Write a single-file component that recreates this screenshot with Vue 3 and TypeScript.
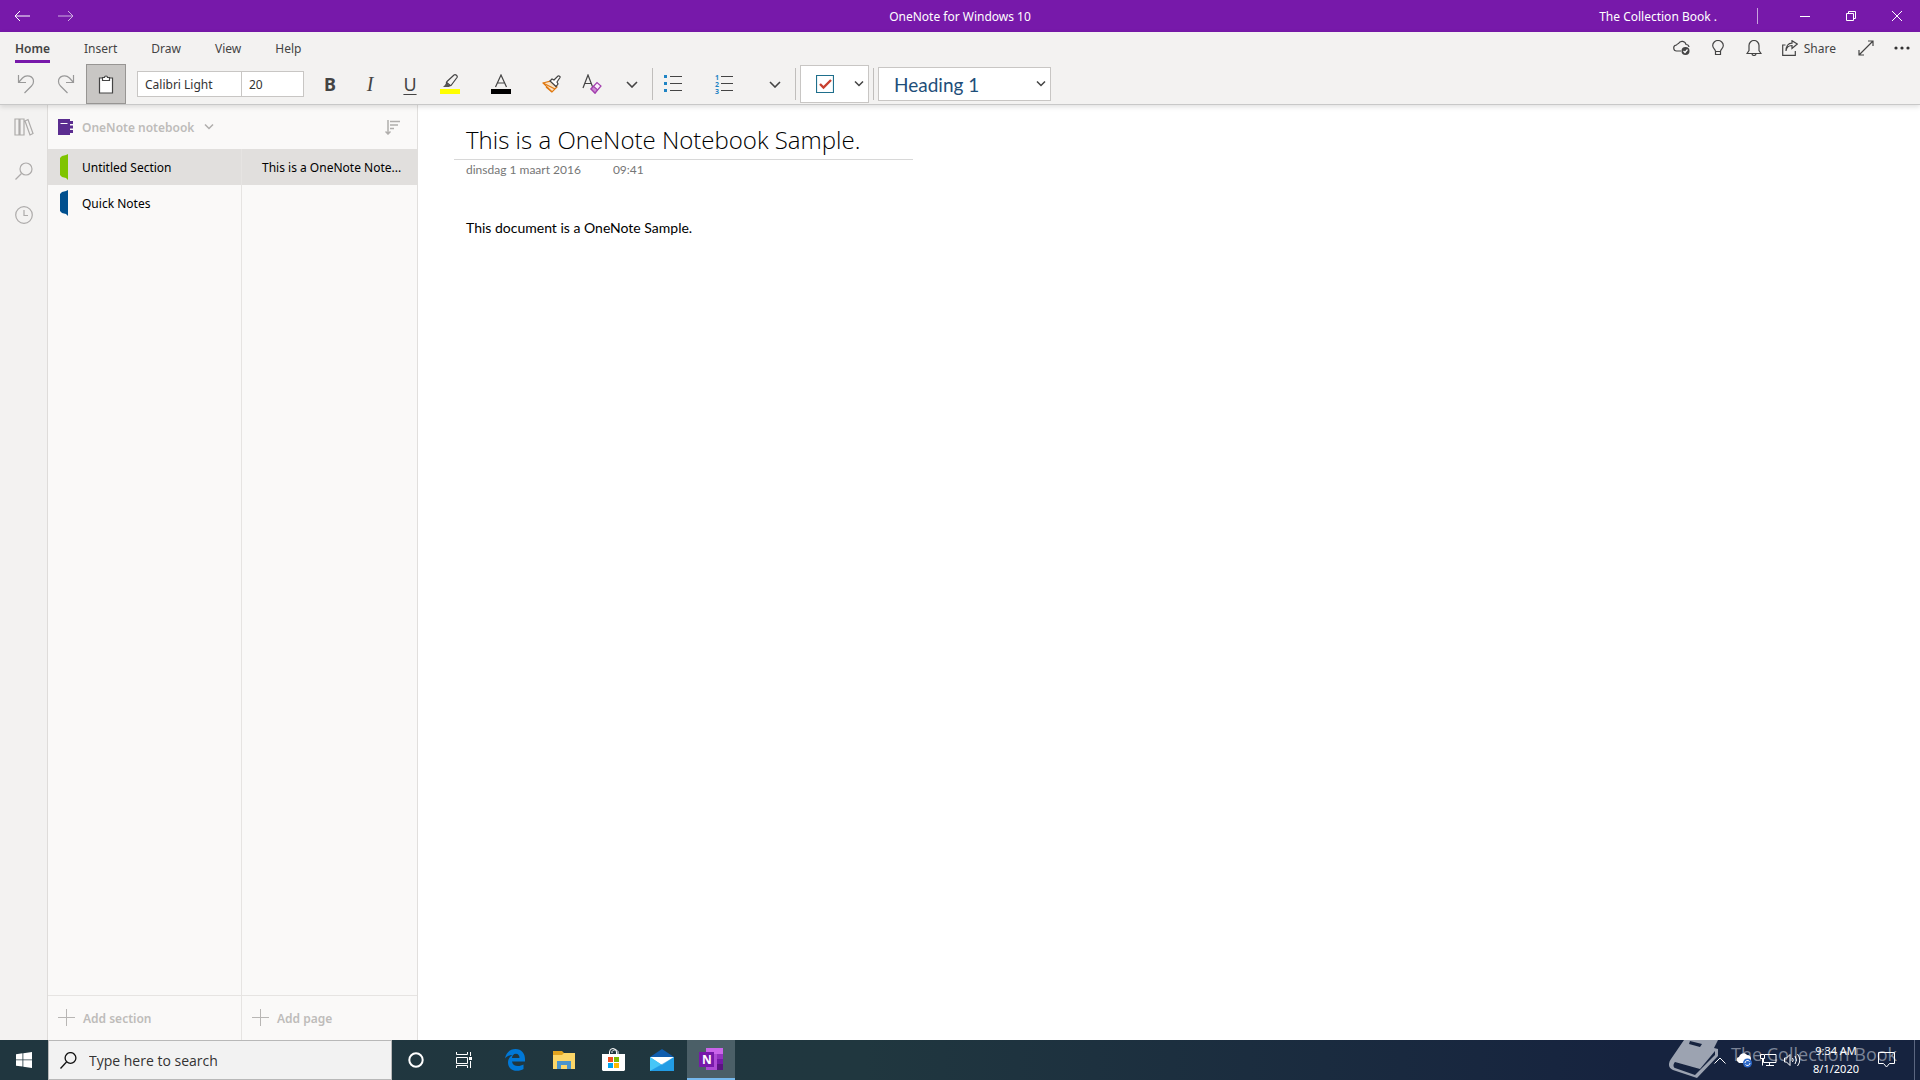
<script setup lang="ts">
import { ref } from 'vue'

const tabs = ['Home', 'Insert', 'Draw', 'View', 'Help']
const activeTab = ref('Home')

const sections = [
  { name: 'Untitled Section', color: '#7fc400' },
  { name: 'Quick Notes', color: '#00508f' },
]
const activeSection = ref('Untitled Section')

const fontName = ref('Calibri Light')
const fontSize = ref('20')
const search = ref('')
</script>

<template>
  <div class="app">
    <header class="titlebar">
      <div class="nav">
        <button aria-label="Back"><svg width="16" height="12" viewBox="0 0 16 12"><path d="M6 1 1 6l5 5M1 6h15" /></svg></button>
        <button class="dim" aria-label="Forward"><svg width="16" height="12" viewBox="0 0 16 12"><path d="m10 1 5 5-5 5M15 6H0" /></svg></button>
      </div>
      <h1>OneNote for Windows 10</h1>
      <div class="caption">
        <span class="account">The Collection Book .</span>
        <span class="caption-sep"></span>
        <button aria-label="Minimize"><svg width="10" height="10" viewBox="0 0 10 10"><path d="M0 5.500h10" /></svg></button>
        <button aria-label="Restore"><svg width="10" height="10" viewBox="0 0 10 10"><path d="M.5 2.500h7v7h-7zM2.500 2.500v-2h7v7h-2" /></svg></button>
        <button aria-label="Close"><svg width="10" height="10" viewBox="0 0 10 10"><path d="m0 0 10 10M10 0 0 10" /></svg></button>
      </div>
    </header>

    <div class="ribbon">
      <div class="tabrow">
        <nav class="tabs">
          <button v-for="t in tabs" :key="t" :class="{ active: t === activeTab }" @click="activeTab = t">{{ t }}</button>
        </nav>
        <div class="actions">
          <button aria-label="Sync status">
            <svg width="18" height="16" viewBox="0 0 18 16"><path d="M8 11H4a3 3 0 0 1-.5-6 3 3 0 0 1 2-1.500A4 4 0 0 1 13 4.500 3 3 0 0 1 16 7" /><circle cx="12.500" cy="11" r="4" fill="#444" stroke="none" /><path d="m10.500 11 1.500 1.500 2.500-3" stroke="#fff" /></svg>
          </button>
          <button aria-label="Tell me">
            <svg width="12" height="16" viewBox="0 0 12 16"><path d="M3.500 11.500C3.500 9 .7 8.500.7 5.500a5.300 5 0 0 1 10.600 0c0 3-2.800 3.500-2.800 6zM3.500 11.500v3h5v-3" /></svg>
          </button>
          <button aria-label="Notifications">
            <svg width="16" height="16" viewBox="0 0 16 16"><path d="M1 13.500h14l-2-3V5.500a5 5 0 0 0-10 0v5zM6 13.500a2 2 0 0 0 4 0" /></svg>
          </button>
          <button class="share">
            <svg width="16" height="16" viewBox="0 0 16 16"><path d="M3.500 5H.7v10.300h12.600V11M4 11c.5-4 3-5.500 6-5.500v3L15.300 4 10 .7v2.500C6 3.200 4 6.500 4 11z" /></svg>
            Share
          </button>
          <button aria-label="Full screen">
            <svg width="16" height="16" viewBox="0 0 16 16"><path d="M1 15 15 1M10 1h5v5M1 10v5h5" /></svg>
          </button>
          <button aria-label="More">
            <svg width="16" height="4" viewBox="0 0 16 4"><g fill="#333" stroke="none"><circle cx="2" cy="2" r="1.600" /><circle cx="8" cy="2" r="1.600" /><circle cx="14" cy="2" r="1.600" /></g></svg>
          </button>
        </div>
      </div>

      <div class="toolbar">
        <button class="faded" aria-label="Undo"><svg width="18" height="20" viewBox="0 0 18 20"><path d="M1.500 1v7.500H9M1.500 8.500l4-4.500c4-4 11-2 11 3.500 0 2-1 3.500-2 4.500l-7 7" /></svg></button>
        <button class="faded" aria-label="Redo"><svg width="18" height="20" viewBox="0 0 18 20"><path d="M16.500 1v7.500H9M16.500 8.500l-4-4.500c-4-4-11-2-11 3.500 0 2 1 3.500 2 4.500l7 7" /></svg></button>
        <button class="paste" aria-label="Paste"><svg width="16" height="19" viewBox="0 0 16 19"><path d="M1.500 3h13v15h-13z" fill="#fff" /><path d="M4.500 5.500v-3h2a1.500 1.500 0 0 1 3 0h2v3z" fill="#fff" /></svg></button>

        <div class="fontbox">
          <input v-model="fontName" class="font-name" aria-label="Font" />
          <input v-model="fontSize" class="font-size" aria-label="Font size" />
        </div>

        <button class="bold" aria-label="Bold">B</button>
        <button class="italic" aria-label="Italic">I</button>
        <button class="underline" aria-label="Underline">U</button>
        <button aria-label="Highlight">
          <svg width="20" height="20" viewBox="0 0 20 20"><path d="M7 7.500 14 1c1.500-1 4 1 3 2.500L11 11.500l-4 .5-1-1zM6 8l5 4" /><path d="m3 13 4-4 3 3-1 1z" fill="#555" stroke="none" /><path d="M0 15h20v5H0z" fill="#ff0" stroke="none" /></svg>
        </button>
        <button class="apart" aria-label="Font color">
          <svg width="20" height="20" viewBox="0 0 20 20"><path d="M4.500 13 10 1l5.500 12M6.500 9h7" /><path d="M0 15h20v5H0z" fill="#000" stroke="none" /></svg>
        </button>
        <button class="apart" aria-label="Format painter">
          <svg width="20" height="18" viewBox="0 0 20 18"><path d="m1 8 8-2 6 6-5 5z" fill="#fbe3c6" stroke="#e07a12" /><path d="m1 8 12 6M4 12l6 5" stroke="#e07a12" /><path d="m8 6 2-2 2 1 4-4c1-.5 2.500.5 2 1.500L15 7l1 2-2 2.500z" fill="#fff" /></svg>
        </button>
        <button aria-label="Clear formatting">
          <svg width="20" height="20" viewBox="0 0 20 20"><path d="M1 14 6 1l5 13M3 9.500h6" /><path d="m9 15 6-6.500 4 3.500-6 7z" fill="#fbeefb" stroke="#a33fae" /><path d="m9 15 2.500-2.700 4 3.500L13 19z" fill="#cb8bd2" stroke="#a33fae" /></svg>
        </button>
        <button aria-label="More formatting"><svg width="12" height="7" viewBox="0 0 12 7"><path d="m1 1 5 5 5-5" stroke-width="1.600" /></svg></button>
        <span class="sep"></span>
        <button aria-label="Bullets">
          <svg width="18" height="18" viewBox="0 0 18 18"><path d="M0 0h3v3H0zM0 7h3v3H0zM0 14h3v3H0z" fill="#1f84c4" stroke="none" /><path d="M6 1.500h12M6 8.500h12M6 15.500h12" /></svg>
        </button>
        <button class="apart numbering" aria-label="Numbering">
          <span class="digits"><i>1</i><i>2</i><i>3</i></span>
          <svg width="12" height="18" viewBox="0 0 12 18"><path d="M0 1.500h12M0 8.500h12M0 15.500h12" /></svg>
        </button>
        <button class="apart" aria-label="More list options"><svg width="12" height="7" viewBox="0 0 12 7"><path d="m1 1 5 5 5-5" stroke-width="1.600" /></svg></button>
        <span class="sep"></span>
        <button class="todo" aria-label="To do tag">
          <svg width="18" height="18" viewBox="0 0 18 18"><path d="M.5.5h17v17H.5z" stroke="#1f6f8c" /><path d="m4 9 3.500 3.500L15 5" stroke="#c8402f" stroke-width="2.400" /></svg>
          <svg width="10" height="6" viewBox="0 0 10 6"><path d="m1 .5 4 4 4-4" stroke-width="1.500" /></svg>
        </button>
        <span class="sep"></span>
        <div class="style-picker">
          <select aria-label="Styles"><option>Heading 1</option></select>
          <svg width="10" height="6" viewBox="0 0 10 6"><path d="m1 .5 4 4 4-4" stroke-width="1.500" /></svg>
        </div>
      </div>
    </div>

    <main class="workspace">
      <aside class="rail">
        <button aria-label="Notebooks"><svg width="20" height="18" viewBox="0 0 20 18"><path d="M1 1h4v16H1zM6 1h4v16H6zM11 3l3-1.500 5 14-3 1.500z" /></svg></button>
        <button aria-label="Search"><svg width="18" height="18" viewBox="0 0 18 18"><circle cx="11" cy="7" r="6" /><path d="M6.500 11.500.5 17.500" /></svg></button>
        <button aria-label="Recent notes"><svg width="18" height="18" viewBox="0 0 18 18"><circle cx="9" cy="9" r="8.300" /><path d="M9 4v5.500h4" /></svg></button>
      </aside>

      <section class="navpane">
        <div class="notebook">
          <svg width="16" height="16" viewBox="0 0 16 16"><path d="M0 0h12v16H0zM12 2h3v3h-3zM12 6.500h3v3h-3zM12 11h3v3h-3z" fill="#5b2d90" /><path d="M2.500 4.500h7" stroke="#fff" /></svg>
          <button class="notebook-name">OneNote notebook <svg width="10" height="6" viewBox="0 0 10 6"><path d="m1 .5 4 4 4-4" /></svg></button>
          <button class="sort" aria-label="Sort pages"><svg width="15" height="15" viewBox="0 0 15 15"><path d="M3 0v14M.5 11.500 3 14l2.500-2.500M5 1.500h10M5 5h8M5 8.500h4" /></svg></button>
        </div>
        <div class="lists">
          <div class="column sections">
            <ul>
              <li v-for="s in sections" :key="s.name">
                <button :class="{ selected: s.name === activeSection }" @click="activeSection = s.name">
                  <svg width="8" height="26" viewBox="0 0 8 26"><path d="M8 0v26l-2-2-4-1-2-2V4l2-2 4-1z" :fill="s.color" /></svg>
                  {{ s.name }}
                </button>
              </li>
            </ul>
            <button class="add"><svg width="18" height="18" viewBox="0 0 18 18"><path d="M0 8.500h17M8.500 0v17" /></svg>Add section</button>
          </div>
          <div class="column pages">
            <ul>
              <li><button class="selected">This is a OneNote Note...</button></li>
            </ul>
            <button class="add"><svg width="18" height="18" viewBox="0 0 18 18"><path d="M0 8.500h17M8.500 0v17" /></svg>Add page</button>
          </div>
        </div>
      </section>

      <article class="page">
        <h2>This is a OneNote Notebook Sample.</h2>
        <div class="stamp"><span>dinsdag 1 maart 2016</span><span>09:41</span></div>
        <p>This document is a OneNote Sample.</p>
      </article>
    </main>

    <footer class="taskbar">
      <button class="start" aria-label="Start"><svg width="16" height="16" viewBox="0 0 16 16"><path d="M0 2.200 6.500 1.300v6.200H0zM7.300 1.200 16 0v7.500H7.300zM0 8.300h6.500v6.200L0 13.700zM7.300 8.300H16V16l-8.700-1.200z" fill="#fff" /></svg></button>
      <label class="search">
        <svg width="17" height="17" viewBox="0 0 17 17"><circle cx="10.500" cy="6" r="5.400" /><path d="M6.500 10 .5 16.500" /></svg>
        <input v-model="search" placeholder="Type here to search" aria-label="Search Windows" />
      </label>
      <button class="task" aria-label="Cortana"><svg width="16" height="16" viewBox="0 0 16 16"><circle cx="8" cy="8" r="6.700" fill="none" stroke="#fff" stroke-width="2" /></svg></button>
      <button class="task" aria-label="Task View"><svg width="16" height="16" viewBox="0 0 16 16"><path d="M.5 0v2.500h11V0M.5 5.500h11v6H.5zM.5 16v-2.500h11V16M14.500 0v4M14.500 9v7" fill="none" stroke="#fff" /><path d="M13 5h3v3h-3z" fill="#fff" /></svg></button>
      <div class="pinned">
        <button class="task" aria-label="Edge"><svg width="20" height="22" viewBox="0 0 20 22"><path d="M0 9.500C1 3.500 5 0 10.500 0 16.500 0 20 4.500 20 10v2.500H7c.3 3 2.800 4.500 6 4.500 2 0 4-.6 5.500-1.500V20c-1.700 1.200-4 1.800-6.500 1.800-5.500 0-9-3.300-9-8.300 0-3.500 1.800-6 4.500-7.500C4.500 6 1.500 7.500 0 9.500zM7 9h7.500c0-2.500-1.200-4.300-3.600-4.300C8.500 4.700 7.300 6.500 7 9z" fill="#0078d7" /></svg></button>
        <button class="task" aria-label="File Explorer"><svg width="22" height="19" viewBox="0 0 22 19"><path d="M0 0h9l2 2h11v16H0z" fill="#e2a41f" /><path d="M0 4h9l2-2h11v16H0z" fill="#fcd667" /><path d="M4 18V10h14v8h-4v-4H8v4z" fill="#4a94cc" /></svg></button>
        <button class="task" aria-label="Store"><svg width="23" height="24" viewBox="0 0 23 24"><path d="M7.500 7V4a3.500 3.500 0 0 1 7 0v3M10 5V3.500a3.500 3.500 0 0 1 6 0V7" fill="none" stroke="#fff" /><path d="M0 6h23v16l-1 1H1l-1-1z" fill="#fff" /><path d="M6 9h5v5H6z" fill="#f25022" /><path d="M12 9h5v5h-5z" fill="#7fba00" /><path d="M6 15h5v5H6z" fill="#00a4ef" /><path d="M12 15h5v5h-5z" fill="#ffb900" /></svg></button>
        <button class="task" aria-label="Mail"><svg width="24" height="22" viewBox="0 0 24 22"><path d="M0 8 12 0l12 8v3H0z" fill="#0f5cad" /><path d="M0 8h24v14H0z" fill="#2fb0ee" /><path d="M0 8h24l-12 8z" fill="#fff" /><path d="M0 8v14l12-6z" fill="#46c6f7" /><path d="M0 22h24L24 8z" fill="#1b90dd" opacity=".6" /></svg></button>
        <button class="task running" aria-label="OneNote">
          <svg width="24" height="22" viewBox="0 0 24 22"><path d="M7 0h17v22H7z" fill="#ae4bd5" /><path d="M7 0h17v6H7z" fill="#ca64ea" /><path d="M18 6h6v5h-6z" fill="#9332bf" /><path d="M18 11h6v5h-6z" fill="#7719aa" /><path d="M18 16h6v6h-6z" fill="#5b1482" /><path d="M0 4h15v15H0z" fill="#7719aa" /><text x="3" y="16" fill="#fff" font-size="12" font-weight="700">N</text></svg>
        </button>
      </div>

      <div class="tray">
        <div class="watermark">
          <svg width="50" height="40" viewBox="0 0 50 40"><path d="M15 0h34l-4 8 4 1v7L28 38 4 30c-5-2-5-7-2-11zM21 1l-1 3 11 3 2-3zM6 22c-2 2-2 5 0 6l20 7L46 15v-4L31 29z" fill="#9ca3b1" fill-rule="evenodd" /></svg>
          <span>The Collection Book</span>
        </div>
        <button aria-label="Show hidden icons"><svg width="12" height="7" viewBox="0 0 12 7"><path d="m.5 6.500 5.500-5.500 5.500 5.500" /></svg></button>
        <button aria-label="OneDrive"><svg width="17" height="15" viewBox="0 0 17 15"><path d="M1 8C0 5 2 4 3 4c1-4 6-5 8-2 3 0 4 2 4 4v4H3z" fill="#fff" stroke="none" /><circle cx="11.500" cy="10" r="4.500" fill="#2c68c8" stroke="none" /><path d="M9 10a2.500 2.500 0 0 1 4.500-1.500M14 10a2.500 2.500 0 0 1-4.500 1.500" /></svg></button>
        <button aria-label="Network"><svg width="17" height="14" viewBox="0 0 17 14"><path d="M5 1.500h11v8H3.500V6M.5 1.500h4v4h-4zM9.500 9.500v3M6 12.500h8M2.500 5.500v7" /></svg></button>
        <button aria-label="Volume"><svg width="17" height="14" viewBox="0 0 17 14"><path d="M.5 5h2l3.500-3.500v11L2.500 9h-2zM8.500 5q1.500 2 0 4M11 3q3 4 0 8M13.500 1q4.500 6 0 12" /></svg></button>
        <div class="clock"><span>9:34 AM</span><span>8/1/2020</span></div>
        <button class="notes" aria-label="Action center"><svg width="17" height="16" viewBox="0 0 17 16"><path d="M.5.5h16v11h-5l-3 3.500-3-3.500h-5z" /></svg></button>
      </div>
    </footer>
  </div>
</template>

<style>
body { margin: 0; }
</style>

<style scoped>
.app {
  display: flex;
  flex-direction: column;
  height: 100vh;
  overflow: hidden;
  font-family: "Noto Sans", "Open Sans", sans-serif;
  font-size: 12px;
  color: #000;
  background: #fff;
}
button, input, select { font: inherit; color: inherit; box-sizing: border-box; }
button {
  display: flex;
  align-items: center;
  justify-content: center;
  margin: 0;
  padding: 0;
  border: 0;
  background: none;
}
ul { margin: 0; padding: 0; list-style: none; }
svg { flex: none; fill: none; }

/* Title bar */
.titlebar { display: grid; grid-template-columns: 1fr auto 1fr; align-items: center; height: 32px; background: #7719aa; color: #fff; }
.titlebar svg { stroke: #fff; }
.titlebar h1 { margin: 0; font-size: 12px; font-weight: 400; }
.nav { display: flex; }
.nav button { width: 44px; height: 32px; }
.nav .dim { opacity: 0.65; }
.caption { display: flex; align-items: center; justify-content: flex-end; }
.caption-sep { width: 1px; height: 16px; margin: 0 24px 0 40px; background: #c9a3de; }
.caption button { width: 46px; height: 32px; }

/* Ribbon */
.ribbon { position: relative; z-index: 1; border-bottom: 1px solid #c8c8c8; background: #f3f2f1; color: #444; box-shadow: 0 2px 5px rgba(0, 0, 0, 0.12); }
.ribbon svg { stroke: #444; stroke-width: 1.2; }
.tabrow { display: flex; justify-content: space-between; height: 32px; }
.tabs { display: flex; gap: 34px; padding-left: 15px; }
.tabs button { height: 31px; border-bottom: 3px solid transparent; padding-top: 4px; }
.tabs .active { border-color: #7719aa; font-weight: 600; }
.actions { display: flex; }
.actions button { width: 36px; height: 32px; }
.actions .share { width: auto; gap: 6px; padding: 0 12px 0 10px; }
.toolbar { display: flex; align-items: center; height: 40px; padding-left: 6px; }
.toolbar button { width: 40px; height: 40px; }
.toolbar .faded svg { stroke: #999; }
.toolbar .paste { border: 1px solid #979593; background: #c8c6c4; }
.toolbar .apart { margin-left: 11px; }
.fontbox { display: flex; margin: 0 6px 0 11px; border: 1px solid #c8c6c4; background: #fff; }
.fontbox input { height: 24px; border: 0; padding: 0 7px; background: none; color: #333; outline: none; }
.font-name { width: 103px; }
.fontbox .font-size { width: 62px; border-left: 1px solid #c8c6c4; }
.bold { font-size: 18px; font-weight: 700; }
.italic { font-family: "Liberation Serif", serif; font-size: 20px; font-style: italic; }
.underline { font-size: 18px; text-decoration: underline; text-underline-offset: 3px; }
.sep { width: 1px; height: 32px; background: #c0bebc; }
.numbering { gap: 2px; }
.digits { display: flex; flex-direction: column; color: #1f84c4; font-size: 7px; line-height: 7px; font-weight: 700; }
.digits i { font-style: normal; }
.toolbar .todo { justify-content: space-between; width: 69px; height: 38px; margin: 0 4px; border: 1px solid #c8c6c4; padding: 0 4px 0 15px; background: #fff; }
.style-picker { position: relative; margin-left: 4px; }
.style-picker select { appearance: none; width: 173px; height: 34px; border: 1px solid #c8c6c4; border-radius: 0; padding: 0 15px; background: #fff; color: #1e4e79; font-family: Lato, sans-serif; font-size: 19px; }
.style-picker svg { position: absolute; right: 5px; top: 14px; pointer-events: none; }

/* Workspace */
.workspace { display: flex; flex: 1; min-height: 0; }
.rail { display: flex; flex-direction: column; width: 47px; border-right: 1px solid #dedcda; background: #f3f2f1; }
.rail button { height: 44px; }
.rail svg { stroke: #adabaa; stroke-width: 1.2; }
.navpane { display: flex; flex-direction: column; width: 369px; border-right: 1px solid #e1dfdd; background: #faf9f8; }
.notebook { display: flex; align-items: center; height: 44px; padding: 0 17px 0 10px; }
.notebook button svg { stroke: #b0aeac; stroke-width: 1.5; }
.notebook-name { gap: 10px; margin-left: 8px; color: #bebcba; font-weight: 600; }
.sort { margin-left: auto; }
.lists { display: flex; flex: 1; }
.column { display: flex; flex-direction: column; justify-content: space-between; }
.sections { width: 193px; border-right: 1px solid #e6e4e2; }
.pages { flex: 1; }
.column li button { width: 100%; height: 36px; justify-content: flex-start; gap: 14px; padding-left: 12px; }
.column .selected { background: #e1dfdd; }
.pages li button { padding-left: 20px; white-space: nowrap; }
.add { height: 45px; justify-content: flex-start; gap: 7px; border-top: 1px solid #e6e4e2; padding-left: 10px; color: #bebcba; font-weight: 600; }
.add svg { stroke: #b8b6b4; }

/* Page canvas */
.page { flex: 1; padding: 16px 36px; font-family: Lato, sans-serif; }
.page h2 { width: 411px; margin: 0; border-bottom: 1px solid #d8d8d8; padding: 0 36px 0 12px; font-family: "Open Sans", sans-serif; font-size: 24px; line-height: 38px; font-weight: 300; white-space: nowrap; }
.stamp { display: flex; gap: 32px; padding-left: 12px; color: #767676; font-size: 12px; line-height: 20px; }
.page p { margin: 38px 0 0; padding-left: 12px; font-size: 14px; line-height: 20px; }

/* Taskbar */
.taskbar { display: flex; height: 40px; background: linear-gradient(90deg, #20363f, #20373f 45%, #16233f 85%); color: #fff; }
.start { width: 48px; }
.search { display: flex; align-items: center; gap: 12px; box-sizing: border-box; width: 344px; border: 1px solid #b8b8b8; padding-left: 11px; background: #f2f2f2; color: #222; }
.search svg { stroke: #111; stroke-width: 1.3; }
.search input { flex: 1; border: 0; padding: 0; background: none; font-family: "Open Sans", sans-serif; font-size: 14px; outline: none; }
.search input::placeholder { color: #333; opacity: 1; }
.task { width: 48px; height: 40px; }
.pinned { display: flex; gap: 1px; margin-left: 3px; }
.running { border-bottom: 2px solid #76b9ed; background: #4b5f67; }
.tray { position: relative; display: flex; align-items: center; margin-left: auto; padding-right: 5px; }
.tray::after { content: ""; width: 1px; height: 40px; background: #5b6680; }
.tray button { position: relative; width: 24px; height: 40px; }
.tray button svg { stroke: #fff; }
.watermark { position: absolute; right: 23px; top: 0; display: flex; gap: 12px; height: 40px; overflow: hidden; color: #7b8497; font-family: "Open Sans", sans-serif; font-size: 18px; line-height: 29px; white-space: nowrap; }
.clock { position: relative; display: flex; flex-direction: column; align-items: center; width: 64px; font-size: 11px; line-height: 18px; }
.tray .notes { width: 36px; margin-right: 10px; }
</style>
